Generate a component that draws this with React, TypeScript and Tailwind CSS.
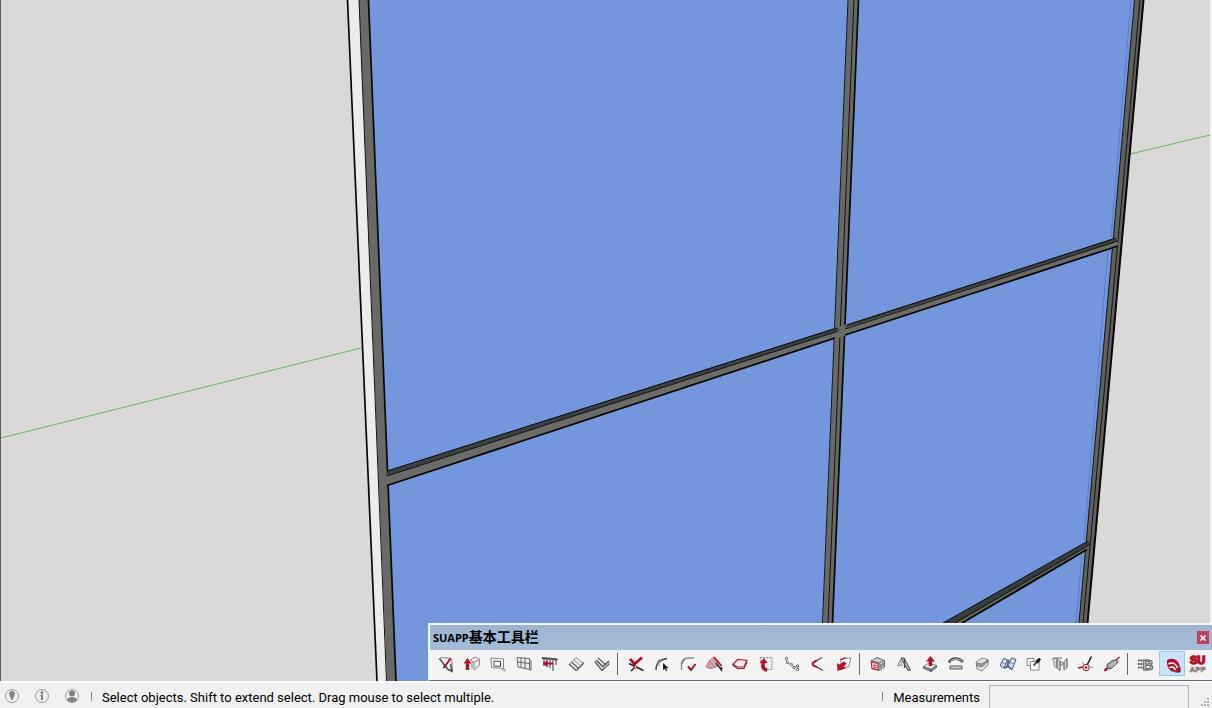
import React, { useState } from 'react';
import { X } from 'lucide-react';

interface Tool {
  name: string;
  icon: React.ReactNode;
}

const RED = '#b3122b';
const INK = '#4a4a4a';
const SOFT = '#8a8a8a';

const drawTools: Tool[] = [
  {
    name: 'Draw wall',
    icon: (
      <>
        <path d="M1.500 2.500L4 1.500l9.500 1 1 12.500-4-1.500z" fill="#ececec" stroke={SOFT} />
        <path d="M1.500 2.500l6 8 3 3.500M12.500 8l1.500 7.500-4-2" stroke={INK} strokeWidth="1.400" />
        <path d="M12.500 2.500L6.500 11" stroke={RED} strokeWidth="2" />
        <path d="M6 9.500L4.500 13l3-2z" fill="#222" />
      </>
    ),
  },
  {
    name: 'Extrude wall',
    icon: (
      <>
        <path d="M6 4l5-3 4.500 2v6.500L10 14V6.500L6 4z" fill="#ececec" stroke={SOFT} />
        <path d="M10 6.500l5.500-3M8 12.500V6" stroke={SOFT} />
        <path d="M3.500 2L-.5 7.500h2.300V14h3.400V7.500h2.300z" fill={RED} />
      </>
    ),
  },
  {
    name: 'Wall opening',
    icon: (
      <>
        <path d="M1 2l12.500 1v9.500l-12-1z" fill="#f2f2f2" stroke={SOFT} />
        <path d="M4 5l6.500.5v5L4 10z" fill="#fff" stroke={INK} />
        <path d="M13.500 12l1.500 1.500V15l-4-2.500" stroke={SOFT} />
      </>
    ),
  },
  {
    name: 'Window grid',
    icon: (
      <>
        <path d="M1 1.500l12.500 1v11L2 11z" fill="#eee" stroke="#666" />
        <path d="M5 2v9.500M9 2.200v10.500M1.500 6l12 1.500M13.500 13.500l1.500 1V4" stroke="#666" />
      </>
    ),
  },
  {
    name: 'Railing',
    icon: (
      <>
        <path d="M0 2l15.500 1.500" stroke={INK} strokeWidth="2" />
        <path d="M2 3v7M5 3v8M8 3v9M11 3v12M14 4v5" stroke="#777" strokeWidth="1.500" />
        <path d="M1 7.500h10" stroke={RED} strokeWidth="2" />
        <path d="M1 7.500L5.500 4v7z" fill={RED} />
      </>
    ),
  },
  {
    name: 'Straight stairs',
    icon: (
      <>
        <path d="M1 8.500L8 1.500l7 5.500-6.500 7.500z" fill="#eee" stroke={SOFT} />
        <path d="M1 8l7 6.500M3.500 6l7 6.500M8.500 14.500L15 8V6" stroke="#5c5c5c" strokeWidth="1.200" />
        <path d="M6 4l7 6" stroke={SOFT} />
      </>
    ),
  },
  {
    name: 'Double stairs',
    icon: (
      <>
        <path d="M1 5.500L3 4l6 6 6-4.500V8l-7 7z" fill="#e8e8e8" stroke={SOFT} />
        <path d="M1 6l7 8.500L15 8M4 2l8 7M2.500 4.500l7 7M9 10l6-5" stroke="#5c5c5c" strokeWidth="1.200" />
      </>
    ),
  },
];

const editTools: Tool[] = [
  {
    name: 'Trim lines',
    icon: (
      <>
        <path d="M1 7.500l14.500 7M3 15l5-5" stroke="#222" strokeWidth="1.400" />
        <path d="M2 3l4.500 5L14 1.500" stroke={RED} strokeWidth="2.800" />
        <circle cx="7.500" cy="11" r="1.300" fill="#fff" stroke={RED} />
      </>
    ),
  },
  {
    name: 'Select arc',
    icon: (
      <>
        <path d="M2 14c0-6 3-10.500 11-11.500" stroke={INK} strokeWidth="1.500" />
        <path d="M3 6l3-3M5 10V5" stroke={SOFT} />
        <path d="M9 7l5.500 5-2.500.2 1.200 2.500-1.200.5-1.200-2.500L9 14z" fill="#222" />
      </>
    ),
  },
  {
    name: 'Fillet',
    icon: (
      <>
        <path d="M1.500 14V7C2 4 5 2 8 2h6" stroke={SOFT} strokeWidth="1.300" />
        <path d="M1.500 8l4-5.500" stroke={INK} />
        <path d="M8 10.500l3 3.500 4.500-6" stroke={RED} strokeWidth="2" />
      </>
    ),
  },
  {
    name: 'Roof faces',
    icon: (
      <>
        <path d="M0 11l3-6 5-4 4 9-7 2.500z" fill="#dba0aa" stroke="#a08c90" />
        <path d="M0 11l5 1.500L12 10M3 5l6 6" stroke="#a38a8f" />
        <path d="M8 1l7.500 9" stroke={RED} strokeWidth="1.800" />
        <path d="M10 7l5.500 7V11" stroke="#222" strokeWidth="1.400" />
      </>
    ),
  },
  {
    name: 'Slab',
    icon: (
      <>
        <path d="M1 8l5-4.500 9 1-3 6.500-7 0z" fill="#f6e6e8" stroke="#a5283c" strokeWidth="1.200" />
        <path d="M1 8v1.500l4.500 3h6.500L15 6" stroke="#8c2436" strokeWidth="1.200" />
      </>
    ),
  },
  {
    name: 'Rotate face',
    icon: (
      <>
        <path d="M2 1.500h12v12H4z" fill="#ededed" stroke={SOFT} strokeDasharray="2 1" />
        <path d="M9 14C5 13.500 4.500 10 5.500 6" stroke={RED} strokeWidth="3.400" />
        <path d="M1.500 7L6 2l3.500 5z" fill={RED} />
      </>
    ),
  },
  {
    name: 'Weld edges',
    icon: (
      <>
        <path d="M2 2l1 5 4 1.500 3 2.500 4-1 .5 4" stroke={SOFT} />
        <g fill="#eee" stroke={INK} strokeWidth=".8">
          <circle cx="2.500" cy="2.500" r="1.200" />
          <circle cx="3.500" cy="6.500" r="1.200" />
          <circle cx="7.500" cy="8.500" r="1.200" />
          <circle cx="10" cy="11.500" r="1.200" />
          <circle cx="13.500" cy="10" r="1.200" />
          <circle cx="13.500" cy="13.500" r="1.200" />
        </g>
      </>
    ),
  },
  {
    name: 'Join curves',
    icon: (
      <>
        <path d="M12 1.500L5 5.500" stroke={INK} strokeWidth="1.300" />
        <path d="M7 4.500c-6 2.500-6 4.500 0 6.500" stroke={RED} strokeWidth="2" />
        <path d="M6 10.500l7 4" stroke={INK} strokeWidth="1.300" />
      </>
    ),
  },
  {
    name: 'Align face',
    icon: (
      <>
        <path d="M4.500 3L15 2l-2.500 9-7 .5z" fill="#fff" stroke={SOFT} />
        <path d="M4.500 4l5-2.500" stroke={RED} strokeWidth="1.300" />
        <path d="M7.500 5.500l3 1.500L8 11l2 1.500-8.500 2.500-.5-8 2.500 1.500z" fill={RED} />
      </>
    ),
  },
];

const modelTools: Tool[] = [
  {
    name: 'Component box',
    icon: (
      <>
        <path d="M1 5l6-3.500 7.500 3V11L9 14.500 2 13z" fill="#ccc" stroke="#666" />
        <path d="M1 5l8 2 5.500-2.500M9 7v7.500" stroke="#666" />
        <path d="M1.500 6l6.500 1.500v6L2 12.500z" fill="#f4cdd0" stroke={RED} strokeWidth=".8" />
        <path d="M3.500 9l3 .8M3.500 11l3 .7" stroke={RED} />
        <path d="M11 8v4M13 7v3" stroke={INK} />
      </>
    ),
  },
  {
    name: 'Mirror',
    icon: (
      <>
        <path d="M1.500 10L4.500 3.500 6 9z" fill="#e0e0e0" stroke={SOFT} />
        <path d="M5 2h3l6.500 12-2.500.5z" fill="#bcbcbc" stroke={INK} />
        <path d="M8.500 2v10" stroke={INK} strokeWidth="1.300" />
      </>
    ),
  },
  {
    name: 'Drop to ground',
    icon: (
      <>
        <path d="M1.500 10.500L7 7l7.500 2.500-5.500 4z" fill="#eee" stroke={SOFT} />
        <path d="M1.500 10.500v2L9 15.500v-2zM9 13.500v2l5.500-4v-2z" fill="#aaa" stroke={INK} strokeWidth=".8" />
        <path d="M8.500 0L4 5.500h2.800V10h3.400V5.500H13z" fill={RED} />
      </>
    ),
  },
  {
    name: 'Bend',
    icon: (
      <>
        <path d="M1 6.500c3-5 10-5 14-.5" stroke={INK} strokeWidth="2.800" />
        <path d="M2 6c3-4 9-4 12.500-.5" stroke="#c5c5c5" />
        <path d="M2 10h12v3H2z" fill="#ccc" stroke={INK} strokeWidth=".9" />
      </>
    ),
  },
  {
    name: 'Round corner',
    icon: (
      <>
        <path d="M2 6l6-4 6 1.500V9l-6 6-5-2z" fill="#dedede" stroke={SOFT} />
        <path d="M2.500 7c3 .5 5 1.500 6 .5l5.500-3.500v2c-3 0-4 4-6 4.500s-4-.5-5.500-1z" fill="#9c9c9c" stroke="#666" strokeWidth=".8" />
      </>
    ),
  },
  {
    name: 'Material pages',
    icon: (
      <>
        <path d="M0 9.500L3.500 2.500l4 1.500-3.500 8zM8 10l3.500-8 4.500 1.500-4 10z" fill="#dbe0ee" stroke="#465482" />
        <path d="M4 12l3-1 1.500-6.500-1-.5M12 13.500l-4-3" stroke="#465482" strokeWidth="1.400" />
        <path d="M2 6.500l4 1.500M10 6.500l4.500 1.500" stroke="#8590b5" />
      </>
    ),
  },
  {
    name: 'Pick layer',
    icon: (
      <>
        <path d="M1 2.500h7v7H1z" fill="#f5f5f5" stroke={SOFT} />
        <path d="M4.500 5.500H13V14H4.500z" fill="#fff" stroke={SOFT} />
        <path d="M7.500 9.500l4-4" stroke={INK} strokeWidth="1.800" />
        <path d="M10.500 4l2.500 2.500M12 5l2-2.500" stroke="#171717" strokeWidth="2.600" />
      </>
    ),
  },
  {
    name: 'Make panels',
    icon: (
      <>
        <path d="M0 3l5-1v10l-3-2V5zM5 2l3 3V15l-3-3z" fill="#ddd" stroke={SOFT} />
        <path d="M8 5l3 2 4-5v10l-3 2V7l-3 3z" fill="#d5d5d5" stroke={SOFT} />
        <path d="M2 2h8M5 4v8M8 5v9M12 6v7M15 3v8" stroke="#777" />
      </>
    ),
  },
  {
    name: 'Set axes',
    icon: (
      <>
        <path d="M9 9L13.500.5" stroke="#222" strokeWidth="1.600" />
        <path d="M0 12l5-1" stroke={RED} strokeWidth="1.400" />
        <path d="M11 11l4.500.5" stroke="#999" />
        <path d="M4 6l2.500 3" stroke="#7ab47f" />
        <circle cx="8" cy="11.500" r="3.200" fill="#f8e2e4" stroke={RED} />
        <circle cx="8" cy="11.500" r="1.200" fill={RED} />
      </>
    ),
  },
  {
    name: 'Section tool',
    icon: (
      <>
        <path d="M0 15L15.500 1" stroke={RED} strokeWidth="1.300" />
        <path d="M3 8.500l5.500-4 4-.5 1.500 1.500-2 3-5 4-4 .5z" fill="#999" stroke={INK} strokeWidth=".9" />
        <path d="M4.500 10l8-5M7 11l5-4" stroke="#ddd" />
        <circle cx="2" cy="13.500" r="1.400" fill={RED} />
      </>
    ),
  },
];

const libraryTools: Tool[] = [
  {
    name: 'Brush library',
    icon: (
      <>
        <path d="M0 4.500h5M0 8h5M0 11.500h5" stroke={INK} strokeWidth="2" strokeDasharray="1.500 .8" />
        <text x="4.500" y="13.500" fontFamily="Liberation Sans, sans-serif" fontSize="15" fontWeight="700" fill="#d5d5d5" stroke={INK} strokeWidth=".9">B</text>
      </>
    ),
  },
  {
    name: 'Cloud library',
    icon: (
      <>
        <path d="M3 4c6-3 11 0 12.500 5l.5 7-8-.5C4.500 13.500 2.500 9.500 3 4z" fill="#b20f2d" />
        <path d="M4.500 8c4-2.500 8 0 9 4M5.500 11.500c3-1.500 5 0 6 2.500" stroke="#fff" strokeWidth="1.500" />
        <path d="M16 16v-5M11 16h5" stroke="#4a1820" />
      </>
    ),
  },
  {
    name: 'SUAPP panel',
    icon: (
      <>
        <text x="0" y="8" fontFamily="Liberation Sans, sans-serif" fontSize="11" fontWeight="700" fill={RED} stroke={RED} strokeWidth="1.500">SU</text>
        <text x="-.5" y="16" fontFamily="Liberation Sans, sans-serif" fontSize="8" fontWeight="700" fill="#f5eee5" stroke="#6e625b" strokeWidth=".6">APP</text>
      </>
    ),
  },
];

const groups = [drawTools, editTools, modelTools, libraryTools];

function Scene() {
  return (
    <svg
      className="absolute inset-0 h-full w-full"
      viewBox="1 0 1209 681"
      preserveAspectRatio="xMinYMin slice"
      role="img"
      aria-label="Model view"
    >
      {/* axis behind the wall */}
      <path d="M1 438L361 348M1130 154L1210 135" stroke="#5fbd5c" strokeWidth="1" />

      {/* glass */}
      <path d="M369 0H1135L1076 681H396z" fill="#7396dc" />
      <path d="M1131 0L1111 238M1108 250L1084 541M1082 556L1076 623" stroke="#5b7dc4" strokeWidth="1" />

      {/* left jamb */}
      <path d="M347 0H359L387 681H377z" fill="#ececeb" />
      <path d="M359 0H369L396 681H387z" fill="#696967" />
      <path d="M359 0L386.500 681" stroke="#111" strokeWidth="1" />
      <path d="M347.500 0L377 681M368.500 0L396 681" stroke="#080808" strokeWidth="1.700" />

      {/* centre mullion */}
      <path d="M848.500 0H859L833 623H823z" fill="#696967" />
      <path d="M848 0L822.500 623M854 0L828 623" stroke="#141414" strokeWidth="1" />
      <path d="M858.500 0L832.500 623" stroke="#080808" strokeWidth="1.700" />

      {/* right jamb */}
      <path d="M1134.500 0H1144L1088 623H1079z" fill="#60605e" />
      <path d="M1134.500 0L1079 623M1140 0L1083 623" stroke="#141414" strokeWidth="1" />
      <path d="M1143.500 0L1087.500 623" stroke="#080808" strokeWidth="2" />

      {/* upper transom */}
      <path d="M387 471L1117 238L1119 246L387 486z" fill="#6b6b68" />
      <path d="M387 471L837 327.500L840 331L387 476zM847 325L1115 238L1118 241L845 328z" fill="#3b4142" />
      <path d="M387 476L837 331.500M845 329L1118 241" stroke="#171717" strokeWidth="1" />
      <path d="M387 471L837 328M847 325L1116 238" stroke="#0c0c0c" strokeWidth="1" />
      <path d="M387 485.500L835 338M845 335L1118 246" stroke="#080808" strokeWidth="1.700" />

      {/* lower transom */}
      <path d="M943 623L1088 541L1091 545L1087 549L962 623z" fill="#66665e" />
      <path d="M943 623L1088 541L1091 544L955 623z" fill="#373d3e" />
      <path d="M943 623L1088 541M955 623L1091 544" stroke="#111" strokeWidth="1" />
      <path d="M962 623L1087 549.500" stroke="#080808" strokeWidth="2" />
    </svg>
  );
}

function SuappToolbar() {
  const [active, setActive] = useState('Cloud library');
  const [open, setOpen] = useState(true);

  if (!open) return null;

  return (
    <section className="absolute right-0 bottom-0 border-t-2 border-l-2 border-b border-t-[#f0f6fc] border-l-[#f0f6fc] border-b-[#66667a] bg-[#f3f3f3]">
      <header className="flex h-[25px] items-center justify-between bg-linear-to-b from-[#9fb3d1] to-[#a4bdd8] px-[3px]">
        <h2 className="font-['Open_Sans','Noto_Sans_CJK_SC',sans-serif] text-[11px] leading-4 font-bold text-black">
          SUAPP<span className="text-[14px]">基本工具栏</span>
        </h2>
        <button
          type="button"
          aria-label="Close"
          onClick={() => setOpen(false)}
          className="flex h-[13px] w-3 items-center justify-center bg-[#bb435d] text-white"
        >
          <X className="h-2 w-2" strokeWidth={5} />
        </button>
      </header>

      <div className="flex h-[30px] items-start pr-px pl-[3px]" role="toolbar" aria-label="SUAPP">
        {groups.map((tools, g) => (
          <React.Fragment key={g}>
            {g > 0 && (
              <div className="flex h-7 w-2 items-center pl-[2px]">
                <div className="h-[22px] w-px bg-[#666]" />
              </div>
            )}
            {tools.map(tool => (
              <button
                key={tool.name}
                type="button"
                aria-label={tool.name}
                aria-pressed={tool.name === active}
                onClick={() => setActive(tool.name)}
                className={
                  tool.name === active
                    ? 'mt-px flex h-[25px] w-[26px] items-center justify-center border border-[#9cc8ee] bg-[#cbe3f8]'
                    : 'mt-px flex h-[25px] w-[26px] items-center justify-center'
                }
              >
                <svg viewBox="0 0 16 16" fill="none" className="h-4 w-4 shrink-0 overflow-visible">
                  {tool.icon}
                </svg>
              </button>
            ))}
          </React.Fragment>
        ))}
      </div>
    </section>
  );
}

function StatusBar() {
  return (
    <footer className="flex h-[27px] shrink-0 items-start border-t-2 border-[#fbfbfb] bg-[#f0f0f0] font-['Roboto','Open_Sans',sans-serif] text-[13px] leading-5 text-black">
      <div className="flex items-center gap-[14px] pt-[5px] pl-[4px]">
        <button type="button" aria-label="Geo-location" className="h-4 w-4">
          <svg viewBox="0 0 16 16" fill="none">
            <circle cx="8" cy="8" r="6.500" stroke="#9b9b9b" />
            <path d="M8 13L5.500 7.500a3 3 0 1 1 5 0z" fill="#858585" />
          </svg>
        </button>
        <button type="button" aria-label="Credits" className="h-4 w-4">
          <svg viewBox="0 0 16 16" fill="none">
            <circle cx="8" cy="8" r="6.500" stroke="#9b9b9b" />
            <circle cx="8" cy="4.500" r="1.400" fill="#808080" />
            <path d="M6.500 7.500H8V12" stroke="#808080" strokeWidth="2" />
          </svg>
        </button>
        <button type="button" aria-label="Sign in" className="h-4 w-4">
          <svg viewBox="0 0 16 16" fill="none">
            <circle cx="8" cy="8" r="6.500" stroke="#9b9b9b" />
            <circle cx="8" cy="5.500" r="3" fill="#808080" />
            <path d="M3 11.500c1-3.500 9-3.500 10 0-1.500 3.500-8.500 3.500-10 0z" fill="#808080" />
          </svg>
        </button>
      </div>
      <div className="mt-[9px] ml-[11px] h-[9px] w-px bg-[#888]" />
      <p className="min-w-0 flex-1 truncate pt-[5px] pl-[10px]">
        Select objects. Shift to extend select. Drag mouse to select multiple.
      </p>
      <div className="mt-[9px] h-[9px] w-px bg-[#888]" />
      <label htmlFor="measurements" className="pt-[5px] pr-[9px] pl-[10px]">
        Measurements
      </label>
      <input
        id="measurements"
        type="text"
        className="mt-[2px] h-[23px] w-[200px] border border-b-0 border-[#b3b6bd] bg-[#f0f0f0] px-1 outline-none"
      />
      <svg viewBox="0 0 23 25" className="h-[25px] w-[23px]" fill="#b0b0b0">
        <path d="M18 15h2v2h-2zM15 18h2v2h-2zM18 18h2v2h-2zM12 21h2v2h-2zM15 21h2v2h-2zM18 21h2v2h-2z" />
      </svg>
    </footer>
  );
}

export default function App() {
  return (
    <div className="flex h-screen w-full flex-col overflow-hidden bg-[#f0f0f0]">
      <main className="relative min-h-0 flex-1">
        <div className="relative h-full border-r-2 border-l border-r-[#f4f4f4] border-l-[#5c5c5c] bg-[#dad9d7]">
          <Scene />
        </div>
        <SuappToolbar />
      </main>
      <StatusBar />
    </div>
  );
}
